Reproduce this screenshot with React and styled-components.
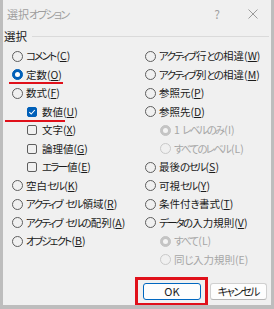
import React from "react";
import styled, { createGlobalStyle, css } from "styled-components";

const Global = createGlobalStyle`
  html, body { margin: 0; padding: 0; background: #bdbdbd; }
  body { font-family: "Noto Sans CJK JP", "Noto Sans", sans-serif; }
`;

const Window = styled.div`
  position: relative;
  margin-left: 3px;
  width: 268px;
  height: 305px;
  background: #f0f0f0;
  color: #1b1b1b;
  font-family: "Noto Sans CJK JP", sans-serif;
  font-size: 10.5px;
  font-feature-settings: "palt" 1;
  display: flex;
  flex-direction: column;
  box-sizing: border-box;
`;

const TitleBar = styled.div`
  height: 27px;
  display: flex;
  align-items: center;
  padding-left: 4px;
  color: #9e9e9e;
  font-size: 11px;
`;

const Title = styled.span`
  flex: 1;
`;

const TitleButton = styled.span`
  width: 36px;
  display: flex;
  justify-content: center;
  align-items: center;
  color: #a0a0a0;
  font-size: 12px;
`;

const GroupHeader = styled.div`
  height: 18px;
  display: flex;
  align-items: center;
  gap: 5px;
  padding-left: 1px;
  padding-right: 2px;
  font-size: 11.5px;
`;

const HeaderLine = styled.div`
  flex: 1;
  height: 1px;
  background: #dadada;
`;

const Columns = styled.div`
  margin-top: 2px;
  padding-left: 9px;
  display: grid;
  grid-template-columns: 133px 1fr;
`;

const Column = styled.div`
  display: flex;
  flex-direction: column;
`;

const Row = styled.div`
  position: relative;
  height: 18.5px;
  display: flex;
  align-items: center;
  gap: ${(p) => (p.$box ? 5 : 3)}px;
  padding-left: ${(p) => (p.$indent ? 15 : 0)}px;
  color: ${(p) => (p.$disabled ? "#a6a6a6" : "#1b1b1b")};
  white-space: nowrap;
  line-height: 1;
`;

const Kana = styled.span`
  letter-spacing: -1.8px;
  margin-right: 1px;
`;

const RedMark = styled.div`
  position: absolute;
  left: ${(p) => p.$left}px;
  width: ${(p) => p.$width}px;
  top: ${(p) => p.$top}px;
  height: 2px;
  background: #e0101a;
`;

const RadioCircle = styled.span`
  flex: none;
  box-sizing: border-box;
  width: 11px;
  height: 11px;
  border-radius: 50%;
  border: 1px solid #5e5e5e;
  display: flex;
  align-items: center;
  justify-content: center;
  ${(p) =>
    p.$checked &&
    css`
      background: #005fb8;
      border-color: #005fb8;
      &::after {
        content: "";
        width: 5px;
        height: 5px;
        border-radius: 50%;
        background: #ffffff;
      }
    `}
  ${(p) =>
    p.$disabled &&
    css`
      border-color: #c9c9c9;
      background: transparent;
    `}
  ${(p) =>
    p.$disabled &&
    p.$checked &&
    css`
      background: #c4c4c4;
      border-color: #c4c4c4;
      &::after {
        background: #f4f4f4;
      }
    `}
`;

const CheckBox = styled.span`
  flex: none;
  box-sizing: border-box;
  width: 10px;
  height: 10px;
  border-radius: 2px;
  border: 1px solid ${(p) => (p.$checked ? "#005fb8" : "#5e5e5e")};
  background: ${(p) => (p.$checked ? "#005fb8" : "transparent")};
  display: flex;
  align-items: center;
  justify-content: center;
`;

const Key = styled.span`
  text-decoration: ${(p) => (p.$plain ? "none" : "underline")};
  text-underline-offset: 1px;
`;

const Footer = styled.div`
  margin-top: auto;
  margin-bottom: 5px;
  display: flex;
  justify-content: flex-end;
  gap: 9px;
  padding-right: 4px;
`;

const Button = styled.button`
  position: relative;
  box-sizing: border-box;
  height: 17px;
  width: ${(p) => p.$w}px;
  padding: 0;
  border-radius: 3px;
  font-family: inherit;
  font-size: 11px;
  font-feature-settings: "palt" 1;
  color: #1b1b1b;
  background: #fdfdfd;
  border: 1px solid ${(p) => (p.$primary ? "#0067c0" : "#d0d0d0")};
  ${(p) => !p.$primary && css`border-bottom-color: #b5b5b5;`}
  display: flex;
  align-items: center;
  justify-content: center;
  line-height: 1;
`;

const RedBox = styled.span`
  position: absolute;
  left: -9px;
  right: -8px;
  top: -7px;
  bottom: -7px;
  border: 3px solid #e0101a;
  pointer-events: none;
`;

const Jp = ({ children }) =>
  children.split(/([\u3040-\u30ff]+)/).map((part, i) =>
    i % 2 === 1 ? <Kana key={i}>{part}</Kana> : part
  );

const Label = ({ text, k, plain }) => (
  <span>
    <Jp>{text}</Jp>(<Key $plain={plain}>{k}</Key>)
  </span>
);

const Radio = ({ text, k, checked, disabled, indent, plain, mark }) => (
  <Row $indent={indent} $disabled={disabled}>
    <RadioCircle $checked={checked} $disabled={disabled} />
    <Label text={text} k={k} plain={plain} />
    {mark && <RedMark $left={mark[0]} $width={mark[1]} $top={mark[2]} />}
  </Row>
);

const Check = ({ text, k, checked, mark }) => (
  <Row $indent $box>
    <CheckBox $checked={checked}>
      {checked && (
        <svg width="8" height="8" viewBox="0 0 8 8">
          <path d="M1.3 4.2 L3.2 6 L6.8 2" fill="none" stroke="#fff" strokeWidth="1.1" />
        </svg>
      )}
    </CheckBox>
    <Label text={text} k={k} />
    {mark && <RedMark $left={mark[0]} $width={mark[1]} $top={mark[2]} />}
  </Row>
);

export default function App() {
  return (
    <>
      <Global />
      <Window>
        <TitleBar>
          <Title>
            <Jp>選択オプション</Jp>
          </Title>
          <TitleButton>?</TitleButton>
          <TitleButton>
            <svg width="10" height="10" viewBox="0 0 10 10">
              <path d="M0.5 0.5 L9.5 9.5 M9.5 0.5 L0.5 9.5" stroke="#9a9a9a" strokeWidth="1" />
            </svg>
          </TitleButton>
        </TitleBar>
        <GroupHeader>
          <span>選択</span>
          <HeaderLine />
        </GroupHeader>
        <Columns>
          <Column>
            <Radio text="コメント" k="C" />
            <Radio text="定数" k="O" checked mark={[-3, 54, 16]} />
            <Radio text="数式" k="F" />
            <Check text="数値" k="U" checked mark={[-7, 60, 17]} />
            <Check text="文字" k="X" />
            <Check text="論理値" k="G" />
            <Check text="エラー値" k="E" />
            <Radio text="空白セル" k="K" />
            <Radio text="アクティブ セル領域" k="R" />
            <Radio text="アクティブ セルの配列" k="A" />
            <Radio text="オブジェクト" k="B" />
          </Column>
          <Column>
            <Radio text="アクティブ行との相違" k="W" />
            <Radio text="アクティブ列との相違" k="M" />
            <Radio text="参照元" k="P" />
            <Radio text="参照先" k="D" />
            <Radio text="1 レベルのみ" k="I" indent disabled checked plain />
            <Radio text="すべてのレベル" k="L" indent disabled plain />
            <Radio text="最後のセル" k="S" />
            <Radio text="可視セル" k="Y" />
            <Radio text="条件付き書式" k="T" />
            <Radio text="データの入力規則" k="V" />
            <Radio text="すべて" k="L" indent disabled checked plain />
            <Radio text="同じ入力規則" k="E" indent disabled plain />
          </Column>
        </Columns>
        <Footer>
          <Button $primary $w={58}>
            OK
            <RedBox />
          </Button>
          <Button $w={57}>
            <Jp>キャンセル</Jp>
          </Button>
        </Footer>
      </Window>
    </>
  );
}
